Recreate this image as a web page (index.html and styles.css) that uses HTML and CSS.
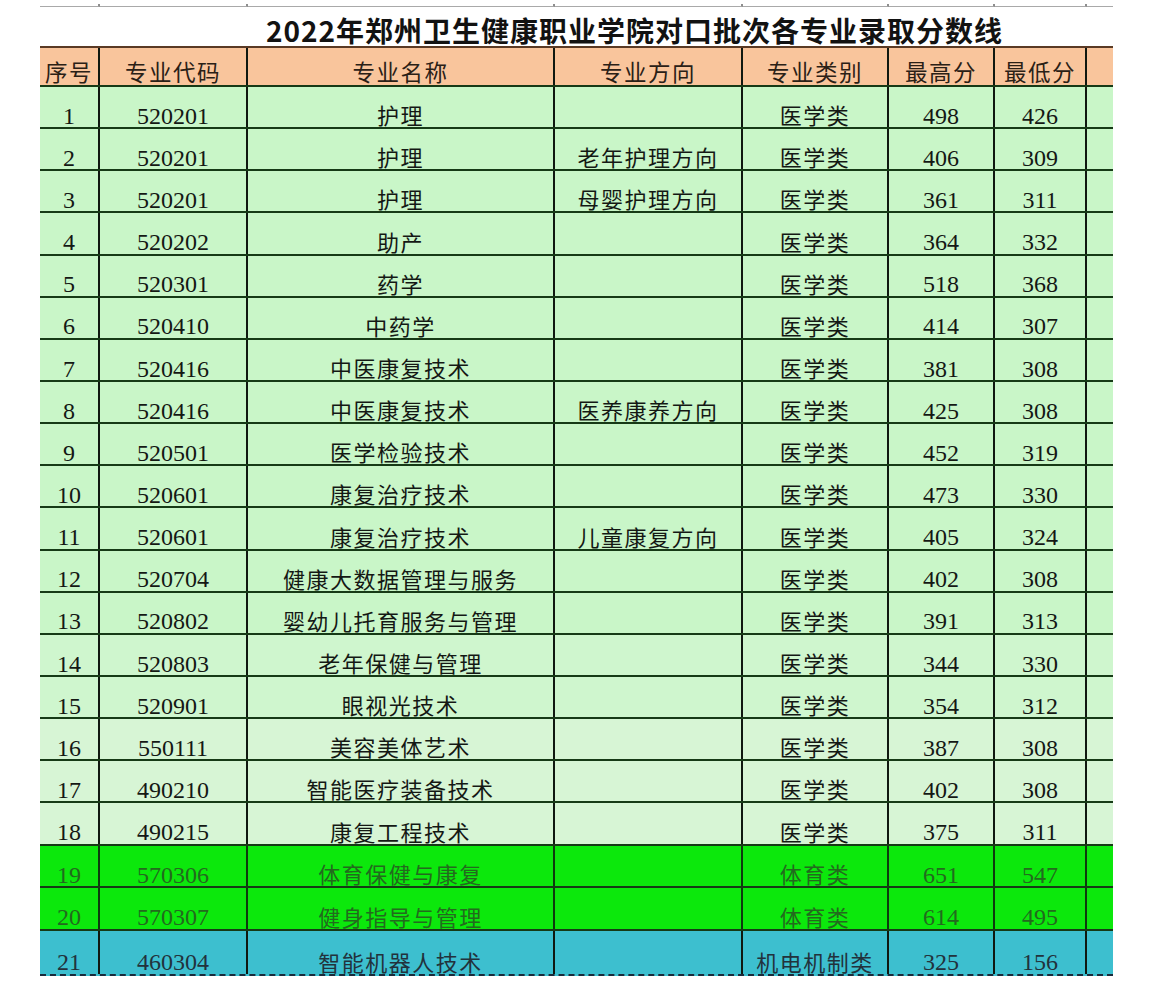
FILE: index.html
```html
<!DOCTYPE html>
<html lang="zh-CN">
<head>
<meta charset="utf-8">
<title>2022年郑州卫生健康职业学院对口批次各专业录取分数线</title>
<link rel="stylesheet" href="styles.css">
</head>
<body>
<div class="sheet">
  <div class="ruler">
    <span></span><span></span><span></span><span></span><span></span><span></span><span></span><span class="last"></span>
  </div>
  <div class="title">2022年郑州卫生健康职业学院对口批次各专业录取分数线</div>
  <div class="table">
    <div class="row head">
      <div class="c">序号</div><div class="c">专业代码</div><div class="c">专业名称</div><div class="c">专业方向</div><div class="c">专业类别</div><div class="c">最高分</div><div class="c">最低分</div><div class="c"></div>
    </div>
    <div class="row l1"><div class="c n">1</div><div class="c n">520201</div><div class="c">护理</div><div class="c"></div><div class="c">医学类</div><div class="c n">498</div><div class="c n">426</div><div class="c"></div></div>
    <div class="row l1"><div class="c n">2</div><div class="c n">520201</div><div class="c">护理</div><div class="c">老年护理方向</div><div class="c">医学类</div><div class="c n">406</div><div class="c n">309</div><div class="c"></div></div>
    <div class="row l1"><div class="c n">3</div><div class="c n">520201</div><div class="c">护理</div><div class="c">母婴护理方向</div><div class="c">医学类</div><div class="c n">361</div><div class="c n">311</div><div class="c"></div></div>
    <div class="row l1"><div class="c n">4</div><div class="c n">520202</div><div class="c">助产</div><div class="c"></div><div class="c">医学类</div><div class="c n">364</div><div class="c n">332</div><div class="c"></div></div>
    <div class="row l1"><div class="c n">5</div><div class="c n">520301</div><div class="c">药学</div><div class="c"></div><div class="c">医学类</div><div class="c n">518</div><div class="c n">368</div><div class="c"></div></div>
    <div class="row l1"><div class="c n">6</div><div class="c n">520410</div><div class="c">中药学</div><div class="c"></div><div class="c">医学类</div><div class="c n">414</div><div class="c n">307</div><div class="c"></div></div>
    <div class="row l1"><div class="c n">7</div><div class="c n">520416</div><div class="c">中医康复技术</div><div class="c"></div><div class="c">医学类</div><div class="c n">381</div><div class="c n">308</div><div class="c"></div></div>
    <div class="row l1"><div class="c n">8</div><div class="c n">520416</div><div class="c">中医康复技术</div><div class="c">医养康养方向</div><div class="c">医学类</div><div class="c n">425</div><div class="c n">308</div><div class="c"></div></div>
    <div class="row l1"><div class="c n">9</div><div class="c n">520501</div><div class="c">医学检验技术</div><div class="c"></div><div class="c">医学类</div><div class="c n">452</div><div class="c n">319</div><div class="c"></div></div>
    <div class="row l1"><div class="c n">10</div><div class="c n">520601</div><div class="c">康复治疗技术</div><div class="c"></div><div class="c">医学类</div><div class="c n">473</div><div class="c n">330</div><div class="c"></div></div>
    <div class="row l1"><div class="c n">11</div><div class="c n">520601</div><div class="c">康复治疗技术</div><div class="c">儿童康复方向</div><div class="c">医学类</div><div class="c n">405</div><div class="c n">324</div><div class="c"></div></div>
    <div class="row l1"><div class="c n">12</div><div class="c n">520704</div><div class="c">健康大数据管理与服务</div><div class="c"></div><div class="c">医学类</div><div class="c n">402</div><div class="c n">308</div><div class="c"></div></div>
    <div class="row l1"><div class="c n">13</div><div class="c n">520802</div><div class="c">婴幼儿托育服务与管理</div><div class="c"></div><div class="c">医学类</div><div class="c n">391</div><div class="c n">313</div><div class="c"></div></div>
    <div class="row l2"><div class="c n">14</div><div class="c n">520803</div><div class="c">老年保健与管理</div><div class="c"></div><div class="c">医学类</div><div class="c n">344</div><div class="c n">330</div><div class="c"></div></div>
    <div class="row l2"><div class="c n">15</div><div class="c n">520901</div><div class="c">眼视光技术</div><div class="c"></div><div class="c">医学类</div><div class="c n">354</div><div class="c n">312</div><div class="c"></div></div>
    <div class="row l3"><div class="c n">16</div><div class="c n">550111</div><div class="c">美容美体艺术</div><div class="c"></div><div class="c">医学类</div><div class="c n">387</div><div class="c n">308</div><div class="c"></div></div>
    <div class="row l3"><div class="c n">17</div><div class="c n">490210</div><div class="c">智能医疗装备技术</div><div class="c"></div><div class="c">医学类</div><div class="c n">402</div><div class="c n">308</div><div class="c"></div></div>
    <div class="row l3"><div class="c n">18</div><div class="c n">490215</div><div class="c">康复工程技术</div><div class="c"></div><div class="c">医学类</div><div class="c n">375</div><div class="c n">311</div><div class="c"></div></div>
    <div class="row g"><div class="c n">19</div><div class="c n">570306</div><div class="c">体育保健与康复</div><div class="c"></div><div class="c">体育类</div><div class="c n">651</div><div class="c n">547</div><div class="c"></div></div>
    <div class="row g"><div class="c n">20</div><div class="c n">570307</div><div class="c">健身指导与管理</div><div class="c"></div><div class="c">体育类</div><div class="c n">614</div><div class="c n">495</div><div class="c"></div></div>
    <div class="row t"><div class="c n">21</div><div class="c n">460304</div><div class="c">智能机器人技术</div><div class="c"></div><div class="c">机电机制类</div><div class="c n">325</div><div class="c n">156</div><div class="c"></div></div>
  </div>
</div>
</body>
</html>
```
FILE: styles.css
```css
* { box-sizing: border-box; }
html, body { margin: 0; padding: 0; background: #ffffff; }
body {
  font-family: "Noto Sans CJK SC", "Noto Sans", sans-serif;
  color: #141814;
}
.sheet {
  width: 1160px;
  height: 1004px;
  padding-left: 40px;
  padding-top: 4px;
}
.ruler {
  display: grid;
  grid-template-columns: 60px 148px 307px 188px 146px 106px 92px 26px;
  width: 1073px;
  height: 3px;
}
.ruler span {
  border-bottom: 1px solid #a9a9a9;
  border-right: 2px solid #8f8f8f;
}
.ruler span.last { border-right: none; }
.title {
  height: 39px;
  padding-left: 226px;
  font-size: 28px;
  font-weight: bold;
  letter-spacing: 1px;
  line-height: 38px;
  padding-top: 4px;
  color: #121212;
  white-space: nowrap;
}
.table {
  width: 1073px;
}
.row {
  display: grid;
  grid-template-columns: 60px 148px 307px 188px 146px 106px 92px 26px;
  height: 42.15px;
  border-bottom: 2px solid #163a16;
}
.row .c {
  display: flex;
  align-items: flex-end;
  justify-content: center;
  border-right: 2px solid #101810;
  font-size: 22px;
  letter-spacing: 1.5px;
  line-height: 1;
  padding-bottom: 2px;
  white-space: nowrap;
}
.row .c:last-child { border-right: none; }
.row .c.n {
  font-family: "Liberation Serif", serif;
  font-size: 24px;
  letter-spacing: 0;
  line-height: 0.85;
  padding-bottom: 1px;
}
.row.head {
  height: 41px;
  border-top: 2px solid #5a3a24;
  background: #f9c59c;
  color: #2a2016;
}
.row.head .c { padding-bottom: 3px; font-size: 22.5px; }
.row.l1 { background: #c9f6c8; }
.row.l2 { background: #cff6ce; }
.row.l3 { background: #d7f5d5; }
.row.g {
  background: #0ce80c;
  color: #236a1e;
  height: 42.6px;
}
.row.g .c { border-right-color: #0e3a0e; }
.row.t {
  background: #3dbfcf;
  color: #22323c;
  height: 45px;
  border-bottom: 2px dashed #1a2a3a;
}
```
